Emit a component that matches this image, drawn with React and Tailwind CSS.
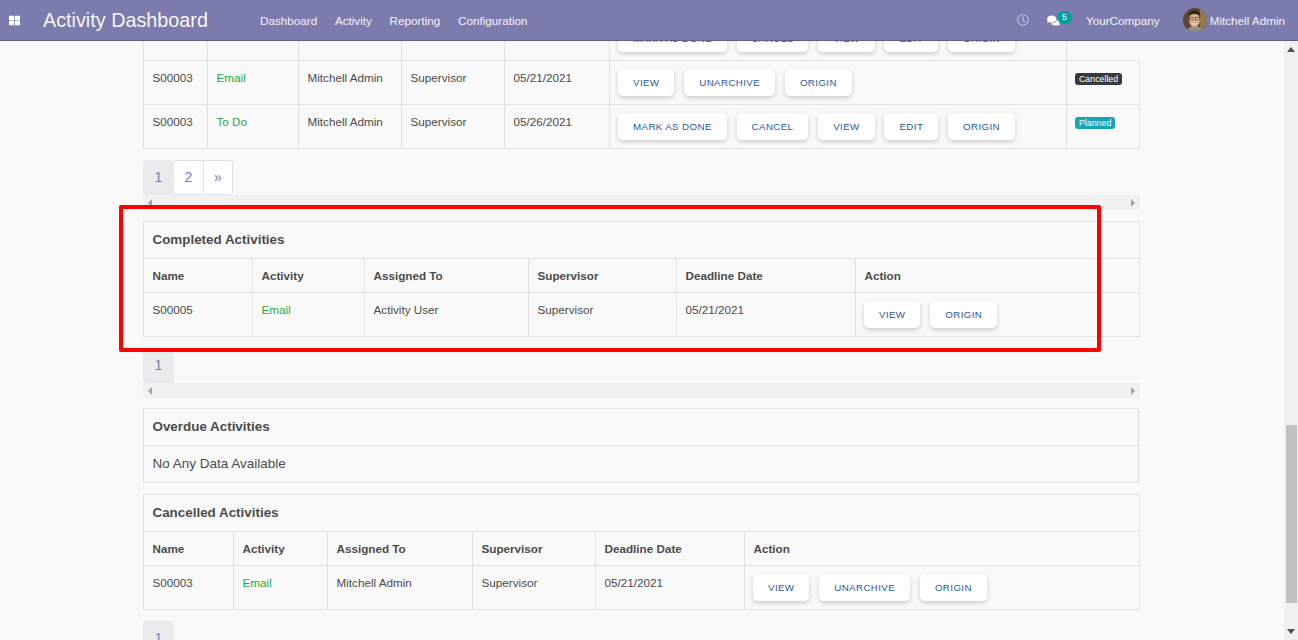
import { FaThLarge, FaRegClock, FaComments } from 'react-icons/fa';

const navLinks = ['Dashboard', 'Activity', 'Reporting', 'Configuration'];

function Btn({ label }) {
  return (
    <button className="h-[27px] px-[15px] bg-white rounded-[5px] uppercase text-[9.75px] tracking-[0.38px] text-[#23599f] shadow-[0_2px_5px_rgba(0,0,0,0.18)] whitespace-nowrap">
      {label}
    </button>
  );
}

function Badge({ label, tone }) {
  return (
    <span className={`inline-block h-[12px] leading-[12px] px-[4px] rounded-[3px] text-[8.8px] text-white ${tone}`}>
      {label}
    </span>
  );
}

function Row({ cells, actions, status }) {
  const td = 'border border-[#dee2e6] align-top px-[8.5px] py-[7px] h-[44px]';
  return (
    <tr>
      <td className={td}>{cells[0]}</td>
      <td className={`${td} text-[#28a745]`}>{cells[1]}</td>
      <td className={td}>{cells[2]}</td>
      <td className={td}>{cells[3]}</td>
      <td className={td}>{cells[4]}</td>
      <td className="border border-[#dee2e6] align-top px-[8px] py-[8px] h-[44px]">
        <div className="flex gap-[9.8px]">
          {actions.map((a) => (
            <Btn key={a} label={a} />
          ))}
        </div>
      </td>
      {status && <td className="border border-[#dee2e6] align-top pl-[8px] pt-[7px] h-[44px]">{status}</td>}
    </tr>
  );
}

function Pager({ pages }) {
  return (
    <div className="flex mt-[11px] h-[35px] text-[14px] text-[#7c7bad]">
      {pages.map((p, i) => (
        <div
          key={p}
          className={
            i === 0
              ? 'w-[31px] bg-[#e9ecef] rounded-l-[3px] flex items-center justify-center'
              : 'w-[30px] bg-white border border-l-0 border-[#dee2e6] flex items-center justify-center last:w-[29px] last:rounded-r-[3px]'
          }
        >
          {p}
        </div>
      ))}
    </div>
  );
}

function HScroll() {
  return (
    <div className="h-[15px] bg-[#f1f1f1] flex items-center justify-between px-[4px]">
      <svg width="6" height="8" viewBox="0 0 6 8"><path d="M5 0v8L1 4z" fill="#a3a3a3" /></svg>
      <svg width="6" height="8" viewBox="0 0 6 8"><path d="M1 0v8l4-4z" fill="#a3a3a3" /></svg>
    </div>
  );
}

function Head({ labels }) {
  return (
    <tr>
      {labels.map((l) => (
        <th key={l} className="border border-[#dee2e6] text-left font-bold px-[8.5px] h-[34px] py-0">
          {l}
        </th>
      ))}
    </tr>
  );
}

function Title({ text, span }) {
  return (
    <tr>
      <th colSpan={span} className="border border-[#dee2e6] text-left font-bold text-[13.4px] px-[8.5px] h-[37px] pt-0 pb-[2px]">
        {text}
      </th>
    </tr>
  );
}

const headLabels = ['Name', 'Activity', 'Assigned To', 'Supervisor', 'Deadline Date', 'Action'];

export default function App() {
  return (
    <div className="relative h-screen overflow-hidden flex flex-col bg-[#f9f9f9] text-[11.7px] leading-[19px] text-[#4c4c4c] font-['Liberation_Sans',Arial,sans-serif]">
      {/* Navbar */}
      <header className="relative z-10 h-[41px] shrink-0 bg-[#7c7bad] border-b border-[#5f5e97] flex items-center text-white/90">
        <div className="w-[43px] pl-[9px]">
          <FaThLarge size={11} className="text-white" />
        </div>
        <div className="text-[19.8px] text-white/95 w-[217px]">Activity Dashboard</div>
        <nav className="flex gap-[17.7px]">
          {navLinks.map((n) => (
            <span key={n}>{n}</span>
          ))}
        </nav>
        <div className="ml-auto flex items-center pr-[13px]">
          <FaRegClock size={12} className="text-white/50" />
          <div className="relative ml-[18px] mr-[26px] w-[13px]">
            <FaComments size={13} className="text-white" />
            <span className="absolute left-[10px] top-[-3px] h-[13px] w-[15px] rounded-full bg-[#00a09d] text-[9px] leading-[13px] text-center text-white">
              5
            </span>
          </div>
          <span>YourCompany</span>
          <svg className="ml-[23px] mr-[3px]" width="24" height="24" viewBox="0 0 24 24">
            <defs>
              <clipPath id="av"><circle cx="12" cy="12" r="12" /></clipPath>
            </defs>
            <g clipPath="url(#av)">
              <rect width="24" height="24" fill="#5d4630" />
              <rect x="17" y="0" width="7" height="24" fill="#94794f" />
              <path d="M4 24c1-5 4-6 8-6s7 2 8 6z" fill="#8a9187" />
              <ellipse cx="11.5" cy="12" rx="5.5" ry="7" fill="#d9ae90" />
              <path d="M5.500 9c0-5 3-6.500 6-6.500s6 1.500 6 6.500c-1-2-2-3-6-3s-5 1-6 3z" fill="#2e221a" />
              <rect x="6.500" y="9.500" width="4" height="2.500" fill="none" stroke="#5a4a40" strokeWidth="0.6" />
              <rect x="12.500" y="9.500" width="4" height="2.500" fill="none" stroke="#5a4a40" strokeWidth="0.6" />
              <path d="M9 15.500c1.500 1 3.500 1 5 0" stroke="#f3e6dc" strokeWidth="1" fill="none" />
            </g>
          </svg>
          <span>Mitchell Admin</span>
        </div>
      </header>

      <div className="flex flex-1 min-h-0">
        {/* Page content, scrolled part way down */}
        <main className="flex-1 min-w-0 overflow-hidden pl-[143px] pr-[144px]">
          <div className="-mt-[25px]">
            <table className="w-[996px] table-fixed border-collapse">
              <colgroup>
                <col className="w-[64px]" />
                <col className="w-[91px]" />
                <col className="w-[103px]" />
                <col className="w-[103px]" />
                <col className="w-[105px]" />
                <col className="w-[457px]" />
                <col className="w-[73px]" />
              </colgroup>
              <tbody>
                <Row
                  cells={['S00003', 'To Do', 'Mitchell Admin', 'Supervisor', '05/21/2021']}
                  actions={['Mark as done', 'Cancel', 'View', 'Edit', 'Origin']}
                />
                <Row
                  cells={['S00003', 'Email', 'Mitchell Admin', 'Supervisor', '05/21/2021']}
                  actions={['View', 'Unarchive', 'Origin']}
                  status={<Badge label="Cancelled" tone="bg-[#343a40]" />}
                />
                <Row
                  cells={['S00003', 'To Do', 'Mitchell Admin', 'Supervisor', '05/26/2021']}
                  actions={['Mark as done', 'Cancel', 'View', 'Edit', 'Origin']}
                  status={<Badge label="Planned" tone="bg-[#17a2b8]" />}
                />
              </tbody>
            </table>
            <Pager pages={['1', '2', '»']} />
            <HScroll />

            <table className="mt-[11px] w-[996px] table-fixed border-collapse">
              <colgroup>
                <col className="w-[109px]" />
                <col className="w-[112px]" />
                <col className="w-[164px]" />
                <col className="w-[148px]" />
                <col className="w-[179px]" />
                <col className="w-[284px]" />
              </colgroup>
              <tbody>
                <Title text="Completed Activities" span={6} />
                <Head labels={headLabels} />
                <Row
                  cells={['S00005', 'Email', 'Activity User', 'Supervisor', '05/21/2021']}
                  actions={['View', 'Origin']}
                />
              </tbody>
            </table>
            <Pager pages={['1']} />
            <HScroll />

            <table className="mt-[10px] w-[996px] border-collapse">
              <tbody>
                <Title text="Overdue Activities" span={1} />
                <tr>
                  <td className="border border-[#dee2e6] px-[8.5px] h-[37px] pt-0 pb-[2px] text-[13.5px]">No Any Data Available</td>
                </tr>
              </tbody>
            </table>

            <table className="mt-[11px] w-[996px] table-fixed border-collapse">
              <colgroup>
                <col className="w-[90px]" />
                <col className="w-[94px]" />
                <col className="w-[145px]" />
                <col className="w-[123px]" />
                <col className="w-[149px]" />
                <col className="w-[395px]" />
              </colgroup>
              <tbody>
                <Title text="Cancelled Activities" span={6} />
                <Head labels={headLabels} />
                <Row
                  cells={['S00003', 'Email', 'Mitchell Admin', 'Supervisor', '05/21/2021']}
                  actions={['View', 'Unarchive', 'Origin']}
                />
              </tbody>
            </table>
            <Pager pages={['1']} />
          </div>
        </main>

        {/* Page scrollbar */}
        <aside className="w-[14px] shrink-0 bg-[#f1f1f1] flex flex-col items-center">
          <svg className="mt-[6px]" width="8" height="5" viewBox="0 0 8 5"><path d="M4 0l4 5H0z" fill="#505050" /></svg>
          <div className="mt-[373px] ml-[1px] h-[178px] w-[11px] bg-[#c1c1c1]" />
          <svg className="mt-auto mb-[6px]" width="8" height="5" viewBox="0 0 8 5"><path d="M0 0h8L4 5z" fill="#505050" /></svg>
        </aside>
      </div>

      {/* Red highlight drawn over the screenshot */}
      <div className="absolute left-[119px] top-[205px] w-[982px] h-[147px] border-[4px] border-[#ff0000] rounded-[2px] pointer-events-none" />
    </div>
  );
}
